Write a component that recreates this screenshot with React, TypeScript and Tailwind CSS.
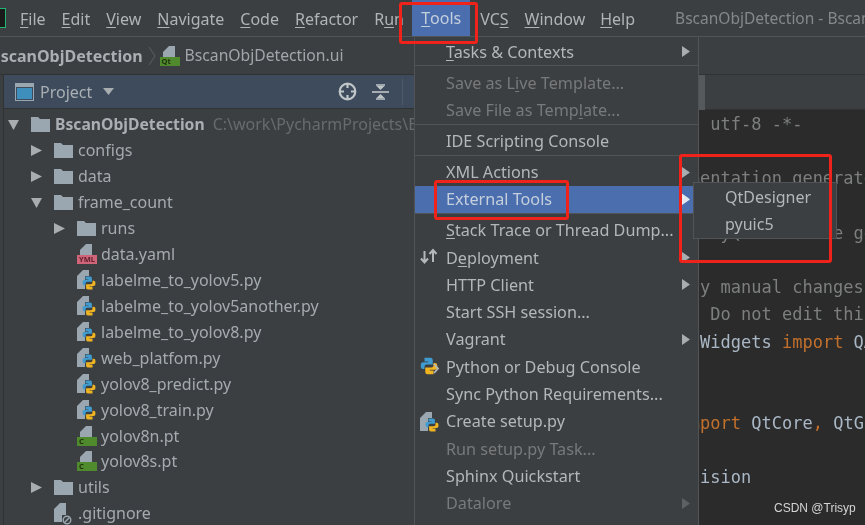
import React from "react";

const Folder = () => (
  <svg width="19" height="16" viewBox="0 0 19 16" className="shrink-0">
    <path d="M0 1h7l2 2h10v13H0z" fill="#9aa7b0" />
  </svg>
);

const Arrow = ({ open }: { open?: boolean }) => (
  <svg width="11" height="11" viewBox="0 0 11 11" className="shrink-0">
    {open ? <path d="M0 1h11L5.5 11z" fill="#a8adb0" /> : <path d="M0 0l11 5.5L0 11z" fill="#a8adb0" />}
  </svg>
);

const Py = ({ size = 12 }: { size?: number }) => (
  <svg width={size} height={size} viewBox="0 0 12 12">
    <path d="M3 0.5h4a1.5 1.5 0 0 1 1.5 1.5v3H4.5A1.5 1.5 0 0 0 3 6.5V8H2A1.5 1.5 0 0 1 .5 6.5V5A1.5 1.5 0 0 1 2 3.5h3.5V3H3z" fill="#3f9bd0" />
    <path d="M9 11.5H5A1.5 1.5 0 0 1 3.5 10V7h4A1.5 1.5 0 0 0 9 5.5V4h1a1.5 1.5 0 0 1 1.5 1.5V7A1.5 1.5 0 0 1 10 8.5H6.5V9H9z" fill="#eeb422" />
  </svg>
);

const PyFile = () => (
  <div className="relative w-[19px] h-[20px] shrink-0">
    <svg width="14" height="19" viewBox="0 0 14 19" className="absolute left-0 top-0">
      <path d="M0 6l6-6h6v6H8v13H0z" fill="#9aa7b0" />
    </svg>
    <div className="absolute right-0 bottom-0">
      <Py size={14} />
    </div>
  </div>
);

const PyConsole = () => (
  <div className="relative w-[20px] h-[19px]">
    <Py size={18} />
    <svg width="8" height="11" viewBox="0 0 8 11" className="absolute right-0 top-[6px]">
      <path d="M2 1l4 4.5L2 10" fill="none" stroke="#b4b7b9" strokeWidth="1.8" />
    </svg>
  </div>
);

const TagFile = ({ color, label, tc = "#20320f" }: { color: string; label: string; tc?: string }) => (
  <div className="relative w-[20px] h-[20px] shrink-0">
    <svg width="14" height="11" viewBox="0 0 14 11" className="absolute left-[3px] top-0">
      <path d="M0 11V6l6-6h6v11z" fill="#9aa7b0" />
    </svg>
    <div
      className="absolute left-0 right-0 top-[11px] h-[9px] text-[7.5px] leading-[9px] pl-[2px] font-bold"
      style={{ backgroundColor: color, color: tc }}
    >
      {label}
    </div>
  </div>
);

const GitFile = () => (
  <div className="relative w-[16px] h-[20px] shrink-0">
    <svg width="14" height="19" viewBox="0 0 14 19" className="absolute left-0 top-0">
      <path d="M0 6l6-6h6v12H8v7H0z" fill="#9aa7b0" />
    </svg>
    <svg width="10" height="10" viewBox="0 0 10 10" className="absolute right-[-2px] bottom-[-2px]">
      <circle cx="5" cy="5" r="3.8" fill="none" stroke="#9aa7b0" strokeWidth="1.4" />
      <path d="M2.5 7.5l5-5" stroke="#9aa7b0" strokeWidth="1.4" />
    </svg>
  </div>
);

function Row({ indent, arrow, icon, children }: { indent: number; arrow?: "open" | "closed"; icon: React.ReactNode; children: React.ReactNode }) {
  return (
    <div className="flex items-center h-[25.93px] whitespace-nowrap" style={{ paddingLeft: indent }}>
      <div className="w-[23px] shrink-0 flex items-center">{arrow && <Arrow open={arrow === "open"} />}</div>
      <div className="flex items-center w-[24px] shrink-0">{icon}</div>
      {children}
    </div>
  );
}

const U = ({ children }: { children: React.ReactNode }) => <span className="underline underline-offset-2 decoration-1">{children}</span>;

function MenuItem({
  children,
  sub,
  dim,
  active,
  icon,
}: {
  children: React.ReactNode;
  sub?: boolean;
  dim?: boolean;
  active?: boolean;
  icon?: React.ReactNode;
}) {
  return (
    <div
      className={`relative flex items-center h-[27.3px] pl-[31px] whitespace-nowrap ${active ? "bg-[#4b6eaf]" : ""} ${dim ? "text-[#77797b]" : active ? "text-[#c5cfdc]" : "text-[#b4b7b9]"}`}
    >
      {icon && <div className="absolute left-[5px] top-[4px]">{icon}</div>}
      {children}
      {sub && (
        <svg width="8" height="11" viewBox="0 0 8 11" className="absolute left-[267px] top-[8px]">
          <path d="M0 0l8 5.5L0 11z" fill={dim ? "#5e6163" : active ? "#e6e9ee" : "#a8adb0"} />
        </svg>
      )}
    </div>
  );
}

const Sep = ({ tall }: { tall?: boolean }) => <div className={`${tall ? "h-[4px]" : "h-[3.5px]"} border-t border-[#515456]`} />;

const Cm = ({ children }: { children: React.ReactNode }) => <span className="text-[#7d7f7f]">{children}</span>;
const Kw = ({ children }: { children: React.ReactNode }) => <span className="text-[#c2702c]">{children}</span>;

function CodeLine({ children }: { children?: React.ReactNode }) {
  return <div className="h-[27.2px] leading-[27.2px] whitespace-pre">{children}</div>;
}

export default function App() {
  return (
    <div
      className="relative w-[865px] h-[525px] overflow-hidden bg-[#3c3f41] text-[#a9afb3] blur-[0.45px] flex flex-col text-[16px]"
      style={{ fontFamily: '"Noto Sans", "Open Sans", sans-serif' }}
    >
      {/* Menu bar */}
      <div className="relative h-[37px] shrink-0 border-b border-[#515456] flex items-center whitespace-nowrap pl-[20px] pt-[1px] text-[#b0b4b7]">
        <div className="absolute left-0 top-[8px] w-[6px] h-[20px] bg-[#1a1a1a] border-r border-y border-[#21b573]" />
        <span className="mr-[16px]"><U>F</U>ile</span>
        <span className="mr-[16px]"><U>E</U>dit</span>
        <span className="mr-[16px]"><U>V</U>iew</span>
        <span className="mr-[16px]"><U>N</U>avigate</span>
        <span className="mr-[16px]"><U>C</U>ode</span>
        <span className="mr-[16px]"><U>R</U>efactor</span>
        <span className="w-[38px] shrink-0">R<U>u</U>n</span>
        <span className="h-[36px] w-[58px] shrink-0 -mt-[1px] bg-[#4b6eaf] flex items-center justify-center text-[#c5cfdc]"><U>T</U>ools</span>
        <span className="ml-[10px] mr-[16px]">VC<U>S</U></span>
        <span className="mr-[15px]"><U>W</U>indow</span>
        <span><U>H</U>elp</span>
        <span className="ml-[40px] text-[#85888a] text-[15.5px]">BscanObjDetection - BscanObjDetection.ui</span>
      </div>

      {/* Breadcrumb */}
      <div className="h-[38px] shrink-0 border-b border-[#323232] flex items-center whitespace-nowrap overflow-hidden">
        <span className="font-bold text-[#a9afb3] -ml-[10px]">BscanObjDetection</span>
        <svg width="8" height="20" viewBox="0 0 8 20" className="ml-[5px] mr-[4px] shrink-0">
          <path d="M1 1l6 9-6 9" fill="none" stroke="#5d6062" strokeWidth="1" />
        </svg>
        <TagFile color="#4f8a2d" label="Qt" />
        <span className="ml-[5px] text-[#a0a6aa] text-[15.7px]">BscanObjDetection.ui</span>
      </div>

      <div className="flex flex-1 min-h-0">
        {/* Project panel */}
        <div className="w-[414px] shrink-0 border-l border-[#323232] ml-[3px] overflow-hidden flex flex-col">
          <div className="relative h-[34px] shrink-0 bg-[#3d4b5c] border-b border-[#323232] flex items-center pl-[11px] text-[#a9afb3]">
            <svg width="19" height="18" viewBox="0 0 19 18" className="shrink-0">
              <rect x="0.5" y="0.5" width="18" height="17" fill="#3d4b5c" stroke="#9aa7b0" />
              <rect x="1" y="1" width="17" height="3" fill="#9aa7b0" />
              <rect x="2" y="5" width="15" height="11" fill="#3f8fbd" />
            </svg>
            <span className="ml-[6px] pt-[1px]">Project</span>
            <svg width="11" height="7" viewBox="0 0 11 7" className="ml-[11px]">
              <path d="M0 0h11L5.5 7z" fill="#a8adb0" />
            </svg>
            <svg width="19" height="19" viewBox="0 0 19 19" className="absolute left-[334px] top-[7px]">
              <circle cx="9.5" cy="9.5" r="7.8" fill="none" stroke="#c0c5c8" strokeWidth="2.2" />
              <path d="M9.5 1v5M9.5 13v5M1 9.5h5M13 9.5h5" stroke="#c0c5c8" strokeWidth="2.2" />
            </svg>
            <svg width="17" height="18" viewBox="0 0 17 18" className="absolute left-[368px] top-[8px]">
              <path d="M0 9h17" stroke="#c0c5c8" strokeWidth="1.6" />
              <path d="M8.5 7L4.5 3h8zM8.5 11L4.5 15h8z" fill="#c0c5c8" />
              <path d="M4 2h9M4 16h9" stroke="#c0c5c8" strokeWidth="1.4" />
            </svg>
            <div className="absolute left-[398px] top-[4px] h-[26px] w-px bg-[#4d5a6a]" />
          </div>
          <div className="pt-[2.5px] pl-[4px] flex flex-col text-[#a4abb0]">
            <Row indent={0} arrow="open" icon={<Folder />}>
              <span className="font-bold text-[15.7px] text-[#a9afb3]">BscanObjDetection</span>
              <span className="ml-[8px] text-[#686b6d]">C:\work\PycharmProjects\BscanObjDetection</span>
            </Row>
            <Row indent={23} arrow="closed" icon={<Folder />}>configs</Row>
            <Row indent={23} arrow="closed" icon={<Folder />}>data</Row>
            <Row indent={23} arrow="open" icon={<Folder />}>frame_count</Row>
            <Row indent={46} arrow="closed" icon={<Folder />}>runs</Row>
            <Row indent={46} icon={<TagFile color="#d0657a" label="YML" tc="#5a1f2a" />}>data.yaml</Row>
            <Row indent={46} icon={<PyFile />}>labelme_to_yolov5.py</Row>
            <Row indent={46} icon={<PyFile />}>labelme_to_yolov5another.py</Row>
            <Row indent={46} icon={<PyFile />}>labelme_to_yolov8.py</Row>
            <Row indent={46} icon={<PyFile />}>web_platfom.py</Row>
            <Row indent={46} icon={<PyFile />}>yolov8_predict.py</Row>
            <Row indent={46} icon={<PyFile />}>yolov8_train.py</Row>
            <Row indent={46} icon={<TagFile color="#4f8a2d" label="C" />}>yolov8n.pt</Row>
            <Row indent={46} icon={<TagFile color="#4f8a2d" label="C" />}>yolov8s.pt</Row>
            <Row indent={23} arrow="closed" icon={<Folder />}>utils</Row>
            <Row indent={23} icon={<GitFile />}>.gitignore</Row>
          </div>
        </div>

        {/* Editor */}
        <div className="flex-1 min-w-0 flex flex-col">
          <div className="h-[35px] shrink-0 bg-[#3c3f41] border-b border-[#323232]" />
          <div
            className="flex-1 bg-[#2b2b2b] pl-[150px] pt-[1px] text-[17px] text-[#a9b7c6] overflow-hidden"
            style={{ fontFamily: '"DejaVu Sans Mono", "Liberation Mono", monospace' }}
          >
            <CodeLine><Cm># -*- coding: utf-8 -*-</Cm></CodeLine>
            <CodeLine />
            <CodeLine><Cm># Form implementation generated from reading ui file</Cm></CodeLine>
            <CodeLine />
            <CodeLine><Cm># Created by: PyQt5 UI code generator</Cm></CodeLine>
            <CodeLine />
            <CodeLine><Cm># WARNING: Any manual changes made to this file</Cm></CodeLine>
            <CodeLine><Cm># run again.  Do not edit this file</Cm></CodeLine>
            <CodeLine><Kw>from</Kw> PyQt5.QtWidgets <Kw>import</Kw> QApplication</CodeLine>
            <CodeLine />
            <CodeLine />
            <CodeLine><Kw>from</Kw> PyQt5 <Kw>import</Kw> QtCore<Kw>,</Kw> QtGui</CodeLine>
            <CodeLine />
            <CodeLine>{"             ision"}</CodeLine>
          </div>
        </div>
      </div>

      {/* Scroll thumb on the tab strip */}
      <div className="absolute left-[699px] top-[75px] w-[6px] h-[35px] bg-[#56595b]" />

      {/* Tools menu */}
      <div className="absolute left-[414px] top-[37px] w-[285px] h-[488px] bg-[#3c3f41] border-x border-[#515456] pt-[1px] text-[16.2px]">
        <MenuItem sub><span><U>T</U>asks &amp; Contexts</span></MenuItem>
        <Sep tall />
        <MenuItem dim><span>Save as L<U>i</U>ve Template...</span></MenuItem>
        <MenuItem dim><span>Save File as Temp<U>l</U>ate...</span></MenuItem>
        <Sep />
        <MenuItem>IDE Scripting Console</MenuItem>
        <Sep tall />
        <MenuItem sub>XML Actions</MenuItem>
        <MenuItem sub active>External Tools</MenuItem>
        <Sep />
        <MenuItem><span><U>S</U>tack Trace or Thread Dump...</span></MenuItem>
        <MenuItem
          sub
          icon={
            <svg width="18" height="17" viewBox="0 0 18 17">
              <path d="M4.5 3v11M1 10.5l3.5 4 3.5-4M13 14V2.5M9.5 6l3.5-4 3.5 4" fill="none" stroke="#b4b7b9" strokeWidth="2" />
            </svg>
          }
        >
          <span>D<U>e</U>ployment</span>
        </MenuItem>
        <MenuItem sub>HTTP Client</MenuItem>
        <MenuItem>Start SSH session...</MenuItem>
        <MenuItem sub>Vagrant</MenuItem>
        <MenuItem icon={<PyConsole />}>Python or Debug Console</MenuItem>
        <MenuItem>Sync Python Requirements...</MenuItem>
        <MenuItem icon={<PyFile />}>Create setup.py</MenuItem>
        <MenuItem dim>Run setup.py Task...</MenuItem>
        <MenuItem>Sphinx Quickstart</MenuItem>
        <MenuItem dim sub>Datalore</MenuItem>
        <MenuItem sub>Coverage.py Tools</MenuItem>
      </div>

      {/* Submenu */}
      <div className="absolute left-[693px] top-[182px] w-[144px] h-[57px] bg-[#3c3f41] border border-[#515456] flex flex-col justify-center pl-[31px] text-[#b4b7b9] text-[16px]">
        <div className="h-[27px] leading-[27px]">QtDesigner</div>
        <div className="h-[27px] leading-[27px]">pyuic5</div>
      </div>
      <svg width="8" height="11" viewBox="0 0 8 11" className="absolute left-[681px] top-[193px]">
        <path d="M0 0l8 5.5L0 11z" fill="#e6e9ee" />
      </svg>

      {/* Red annotations */}
      <div className="absolute left-[399px] top-[2px] w-[79px] h-[42px] border-[3px] border-[#f0231a] rounded-[3px]" />
      <div className="absolute left-[434px] top-[180px] w-[135px] h-[40px] border-[3px] border-[#f0231a] rounded-[3px]" />
      <div className="absolute left-[679px] top-[154px] w-[153px] h-[109px] border-[3px] border-[#f0231a] rounded-[3px]" />

      <div
        className="absolute left-[774px] top-[500px] text-[12px] leading-[16px] text-[#d4d4d4] whitespace-nowrap"
        style={{ fontFamily: '"Liberation Sans", sans-serif' }}
      >
        CSDN @Trisyp
      </div>
    </div>
  );
}
